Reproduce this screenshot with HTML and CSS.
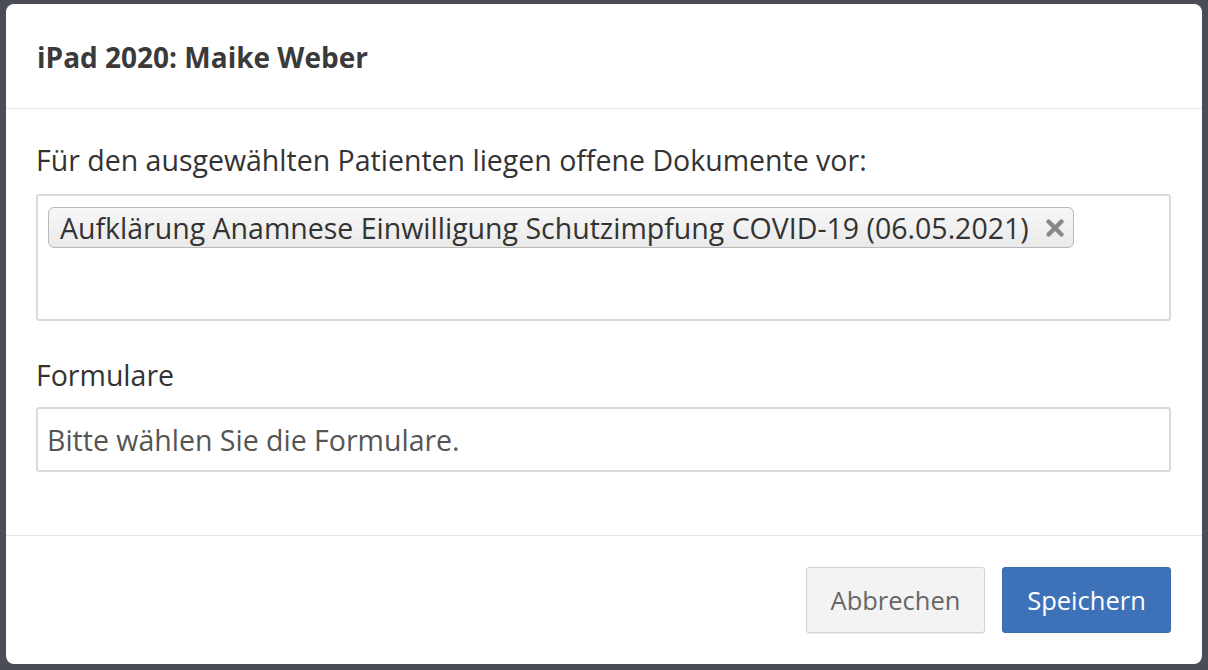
FILE: index.html
```html
<!DOCTYPE html>
<html lang="de">
<head>
    <meta charset="UTF-8">
    <meta name="viewport" content="width=device-width, initial-scale=1.0">
    <title>iPad 2020: Maike Weber</title>
    <link rel="stylesheet" href="styles.css">
</head>
<body>
    <div class="modal">
        <header class="modal-header">
            <h4 class="modal-title">iPad 2020: Maike Weber</h4>
        </header>
        <main class="modal-body">
            <label class="field-label">Für den ausgewählten Patienten liegen offene Dokumente vor:</label>
            <div class="tag-box">
                <span class="tag">
                    <span class="tag-text">Aufklärung Anamnese Einwilligung Schutzimpfung COVID-19 (06.05.2021)</span>
                    <svg class="tag-remove" viewBox="0 0 20 20" width="20" height="20">
                        <path d="M3.5 3.5 L16.5 16.5 M16.5 3.5 L3.5 16.5" stroke="#888" stroke-width="4.4" stroke-linecap="round"/>
                    </svg>
                </span>
            </div>

            <label class="field-label label-forms">Formulare</label>
            <div class="select-box">
                <span class="placeholder">Bitte wählen Sie die Formulare.</span>
            </div>
        </main>
        <footer class="modal-footer">
            <button class="btn btn-default">Abbrechen</button>
            <button class="btn btn-primary">Speichern</button>
        </footer>
    </div>
</body>
</html>
```

FILE: styles.css
```css
/* General Styles */
html, body {
    height: 100%;
}

body {
    margin: 0;
    padding: 4px 6px 6px;
    box-sizing: border-box;
    background-color: #4a4c56;
    font-family: 'Open Sans', 'Lato', sans-serif;
    color: #333;
}

.modal {
    height: 660px;
    background-color: #fff;
    border-radius: 8px;
    display: flex;
    flex-direction: column;
    overflow: hidden;
}

.modal-header {
    height: 105px;
    box-sizing: border-box;
    padding: 2px 31px 0;
    border-bottom: 1px solid #e5e5e5;
    display: flex;
    align-items: center;
}

.modal-title {
    margin: 0;
    font-size: 28px;
    font-weight: bold;
    color: #3a3a3a;
}

.modal-body {
    padding: 31px 31px 63px 30px;
    display: flex;
    flex-direction: column;
}

.field-label {
    font-size: 28.5px;
    line-height: 40px;
    color: #333;
}

.label-forms {
    margin-top: 34px;
}

.tag-box {
    margin-top: 14px;
    height: 127px;
    box-sizing: border-box;
    border: 2px solid #d6dbde;
    border-radius: 3px;
    padding: 11px 10px;
}

.tag {
    display: inline-flex;
    align-items: center;
    height: 41px;
    box-sizing: border-box;
    padding: 0 8px 0 11px;
    border: 1px solid #b9b9b9;
    border-radius: 6px;
    background: linear-gradient(#f7f7f7, #e9e9e9);
    font-size: 28.5px;
    color: #333;
}

.tag-remove {
    margin-left: 16px;
    display: block;
}

.select-box {
    margin-top: 12px;
    height: 65px;
    box-sizing: border-box;
    border: 2px solid #d6dbde;
    border-radius: 3px;
    padding: 0 9px;
    display: flex;
    align-items: center;
}

.placeholder {
    font-size: 28.5px;
    color: #555;
}

.modal-footer {
    flex: 1;
    border-top: 1px solid #e5e5e5;
    padding: 31px 31px 0;
    display: flex;
    justify-content: flex-end;
    align-items: flex-start;
    gap: 17px;
}

.btn {
    height: 66px;
    padding: 0;
    font-family: inherit;
    font-size: 25.5px;
    border-radius: 3px;
    cursor: pointer;
}

.btn-default {
    width: 179px;
    background-color: #f4f3f3;
    border: 1px solid #d3d3d3;
    box-shadow: 0 1px 1px rgba(0, 0, 0, 0.08);
    color: #666;
}

.btn-primary {
    width: 169px;
    background-color: #3d71b8;
    border: 1px solid #3a6cb0;
    color: #fff;
}
```
